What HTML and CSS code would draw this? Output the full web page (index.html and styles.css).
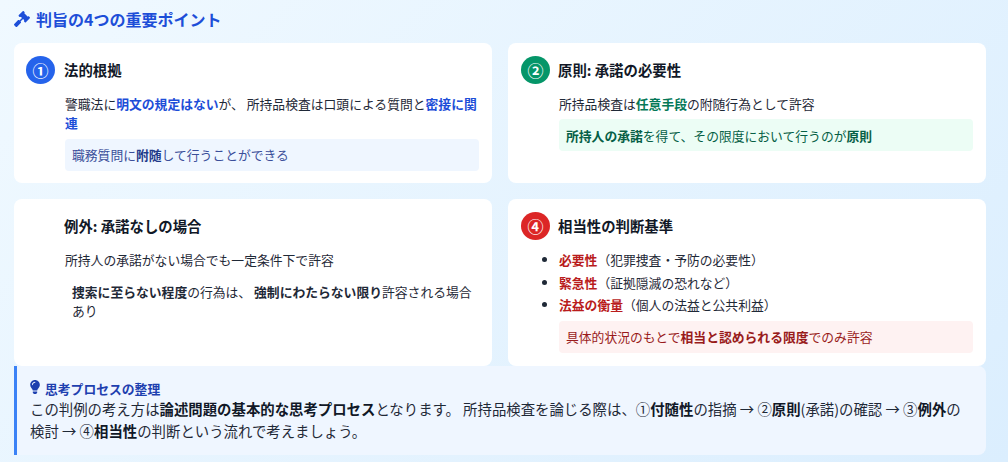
FILE: index.html
```html
<!DOCTYPE html>
<html lang="ja">
<head>
<meta charset="utf-8">
<title>判旨の4つの重要ポイント</title>
<link rel="stylesheet" href="styles.css">
</head>
<body>
<main class="page">
  <h2 class="heading">
    <svg class="icon-gavel" viewBox="0 0 512 512" aria-hidden="true"><path fill="currentColor" d="M504.971 199.362l-22.627-22.627c-9.373-9.373-24.569-9.373-33.941 0l-5.657 5.657L329.608 69.255l5.657-5.657c9.373-9.373 9.373-24.569 0-33.941L312.638 7.029c-9.373-9.373-24.569-9.373-33.941 0L154.246 131.48c-9.373 9.373-9.373 24.569 0 33.941l22.627 22.627c9.373 9.373 24.569 9.373 33.941 0l5.657-5.657 39.598 39.598-81.04 81.04-5.657-5.657c-12.497-12.497-32.758-12.497-45.255 0L9.373 412.118c-12.497 12.497-12.497 32.758 0 45.255l45.255 45.255c12.497 12.497 32.758 12.497 45.255 0l114.745-114.745c12.497-12.497 12.497-32.758 0-45.255l-5.657-5.657 81.04-81.04 39.598 39.598-5.657 5.657c-9.373 9.373-9.373 24.569 0 33.941l22.627 22.627c9.373 9.373 24.569 9.373 33.941 0l124.451-124.451c9.372-9.372 9.372-24.568 0-33.941z"/></svg>
    判旨の4つの重要ポイント
  </h2>
  <div class="grid">
    <section class="card">
      <header class="card-head"><span class="num num-blue">①</span><h3>法的根拠</h3></header>
      <div class="card-body">
        <p>警職法に<strong class="t-blue">明文の規定はない</strong>が、 所持品検査は口頭による質問と<strong class="t-blue">密接に関連</strong></p>
        <p class="note note-blue">職務質問に<strong>附随</strong>して行うことができる</p>
      </div>
    </section>
    <section class="card">
      <header class="card-head"><span class="num num-green">②</span><h3>原則: 承諾の必要性</h3></header>
      <div class="card-body">
        <p>所持品検査は<strong class="t-green">任意手段</strong>の附随行為として許容</p>
        <p class="note note-green"><strong>所持人の承諾</strong>を得て、その限度において行うのが<strong>原則</strong></p>
      </div>
    </section>
    <section class="card">
      <header class="card-head"><span class="num num-none">③</span><h3>例外: 承諾なしの場合</h3></header>
      <div class="card-body">
        <p>所持人の承諾がない場合でも一定条件下で許容</p>
        <p class="note note-plain"><strong>捜索に至らない程度</strong>の行為は、 <strong>強制にわたらない限り</strong>許容される場合あり</p>
      </div>
    </section>
    <section class="card">
      <header class="card-head"><span class="num num-red">④</span><h3>相当性の判断基準</h3></header>
      <div class="card-body">
        <ul class="list">
          <li><strong class="t-red">必要性</strong>（犯罪捜査・予防の必要性）</li>
          <li><strong class="t-red">緊急性</strong>（証拠隠滅の恐れなど）</li>
          <li><strong class="t-red">法益の衡量</strong>（個人の法益と公共利益）</li>
        </ul>
        <p class="note note-red">具体的状況のもとで<strong>相当と認められる限度</strong>でのみ許容</p>
      </div>
    </section>
  </div>
  <aside class="summary">
    <h4>
      <svg class="icon-bulb" viewBox="0 0 352 512" aria-hidden="true"><path fill="currentColor" d="M96.06 454.35c.01 6.29 1.87 12.45 5.36 17.69l17.09 25.69a31.99 31.99 0 0 0 26.64 14.28h61.71a31.99 31.99 0 0 0 26.64-14.28l17.09-25.69a31.989 31.989 0 0 0 5.36-17.69l.04-38.35H96.01l.05 38.35zM0 176c0 44.37 16.45 84.85 43.56 115.78 16.52 18.85 42.36 58.23 52.21 91.45.04.26.07.52.11.78h160.24c.04-.26.07-.51.11-.78 9.85-33.22 35.69-72.6 52.21-91.45C335.55 260.85 352 220.37 352 176 352 78.61 272.91-.3 175.45 0 73.44.31 0 82.97 0 176zm176-80c-44.11 0-80 35.89-80 80 0 8.84-7.16 16-16 16s-16-7.16-16-16c0-61.76 50.24-112 112-112 8.84 0 16 7.16 16 16s-7.16 16-16 16z"/></svg>
      思考プロセスの整理
    </h4>
    <p>この判例の考え方は<strong>論述問題の基本的な思考プロセス</strong>となります。 所持品検査を論じる際は、①<strong>付随性</strong>の指摘 → ②<strong>原則</strong>(承諾)の確認 → ③<strong>例外</strong>の検討 → ④<strong>相当性</strong>の判断という流れで考えましょう。</p>
  </aside>
</main>
</body>
</html>
```
FILE: styles.css
```css
* { box-sizing: border-box; }
html, body { margin: 0; height: 100%; }
body {
  background: linear-gradient(135deg, #f0f9ff 0%, #dbeefe 100%);
  font-family: "Noto Sans CJK JP", "Noto Sans", sans-serif;
  color: #1f2937;
  overflow: hidden;
}
.page { padding: 8px 22px 0 14px; }
.heading {
  margin: 0 0 13px;
  display: flex;
  align-items: center;
  gap: 6px;
  font-size: 16px;
  line-height: 22px;
  font-weight: 700;
  color: #1d4ed8;
}
.icon-gavel { width: 16px; height: 16px; }
.grid {
  display: grid;
  grid-template-columns: 1fr 1fr;
  gap: 16px;
}
.card {
  background: #fff;
  border-radius: 8px;
  padding: 12.8px 13px 12.8px 12px;
}
.card-head {
  display: flex;
  align-items: center;
  gap: 9px;
  margin-bottom: 10px;
}
.card-head h3 {
  margin: 0;
  font-size: 14.4px;
  line-height: 20px;
  font-weight: 700;
  color: #111827;
}
.num {
  flex: none;
  width: 29px;
  height: 28px;
  border-radius: 50%;
  display: flex;
  align-items: center;
  justify-content: center;
  font-size: 16px;
  font-weight: 700;
  color: #fff;
}
.card:nth-child(even) .num { margin-left: 1px; margin-right: -1px; }
.num-blue { background: #2563eb; }
.num-green { background: #059669; }
.num-red { background: #dc2626; }
.num-none { background: transparent; }
.card-body { padding-left: 39px; font-size: 12.8px; line-height: 19.2px; }
.card-body p { margin: 0; }
.card-body .note {
  margin-top: 6.4px;
  padding: 6.4px 7px;
  border-radius: 4px;
}
.t-blue { color: #1d4ed8; }
.t-green { color: #047857; }
.t-red { color: #b91c1c; }
.note-blue { background: #eff6ff; color: #3b4f9a; }
.note-blue strong { color: #1e3a8a; }
.note-green { background: #ecfdf5; color: #065f46; }
.note-plain { background: transparent; }
.note-red { background: #fef2f2; color: #991b1b; }
.list { margin: 0; padding: 0; list-style: disc; }
.list li + li { margin-top: 3.2px; }
.card-body .list + .note { margin-top: 6.8px; }
.summary {
  background: #eff6ff;
  border-left: 3px solid #3b82f6;
  border-radius: 0 8px 8px 0;
  padding: 12.8px 13px;
}
.summary h4 {
  margin: 0;
  display: flex;
  align-items: center;
  gap: 5px;
  font-size: 12.8px;
  line-height: 19.2px;
  font-weight: 700;
  color: #1e40af;
}
.icon-bulb { width: 10px; height: 14px; position: relative; top: -1px; }
.summary p {
  margin: 0;
  font-size: 14.4px;
  line-height: 22px;
  color: #1f2937;
}
.summary strong { color: #111827; }
```
